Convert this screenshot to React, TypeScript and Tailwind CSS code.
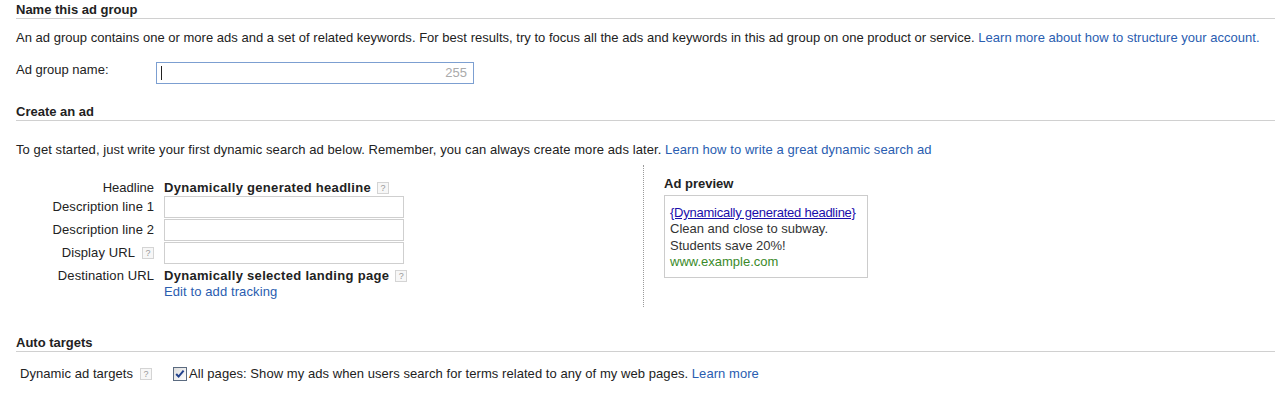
import React from "react";

function Help() {
  return (
    <span className="inline-flex h-[12px] w-[12px] items-center justify-center border border-[#d4d4d4] bg-[#f7f7f7] text-[9px] font-normal leading-none tracking-normal text-[#999]">
      ?
    </span>
  );
}

function Heading({ children }: { children: React.ReactNode }) {
  return (
    <div className="border-b border-[#d0d0d0] font-bold leading-[16px] text-[#222]">
      {children}
    </div>
  );
}

export default function App() {
  const link = "text-[#2a5db0]";
  return (
    <div
      className="w-[1278px] h-[397px] overflow-hidden bg-white pl-4 pr-[3px] pt-[2px] text-[13px] text-[#222]"
      style={{ fontFamily: '"Liberation Sans", Arial, sans-serif' }}
    >
      <Heading>Name this ad group</Heading>
      <p className="mt-[11px] whitespace-nowrap leading-[16px] tracking-[0.02px]">
        An ad group contains one or more ads and a set of related keywords. For best results, try to focus all the ads and keywords in this ad group on one product or service.{" "}
        <span className={link}>Learn more about how to structure your account.</span>
      </p>
      <div className="mt-[16px] flex items-start">
        <div className="w-[140px] leading-[16px]">Ad group name:</div>
        <div className="flex h-[22px] w-[318px] items-center justify-between border border-[#7c9fd1] pl-[4px] pr-[6px]">
          <span className="h-[14px] w-px bg-[#222]" />
          <span className="text-[#aaa]">255</span>
        </div>
      </div>

      <div className="mt-[20px]">
        <Heading>Create an ad</Heading>
      </div>
      <p className="mt-[21px] leading-[16px] tracking-[0.08px]">
        To get started, just write your first dynamic search ad below. Remember, you can always create more ads later.{" "}
        <span className={link}>Learn how to write a great dynamic search ad</span>
      </p>

      <div className="mt-[7px] flex h-[142px]">
        <div className="w-[627px] pt-[15px]">
          <div className="flex items-center leading-[16px]">
            <div className="w-[138px] text-right">Headline</div>
            <div className="ml-[10px] flex items-center gap-[6px] font-bold tracking-[0.3px]">
              Dynamically generated headline <Help />
            </div>
          </div>
          <div className="flex flex-col gap-[1px]">
            {["Description line 1", "Description line 2"].map((l) => (
              <div key={l} className="flex items-center">
                <div className="w-[138px] text-right leading-[16px] tracking-[0.1px]">{l}</div>
                <div className="ml-[10px] h-[22px] w-[240px] border border-[#cfcfcf]" />
              </div>
            ))}
            <div className="flex items-center">
              <div className="flex w-[138px] items-center justify-end gap-[7px] leading-[16px] tracking-[0.1px]">
                Display URL <Help />
              </div>
              <div className="ml-[10px] h-[22px] w-[240px] border border-[#cfcfcf]" />
            </div>
          </div>
          <div className="mt-[4px] flex items-start leading-[16px]">
            <div className="w-[138px] text-right tracking-[0.1px]">Destination URL</div>
            <div className="ml-[10px]">
              <div className="flex items-center gap-[6px] font-bold tracking-[0.3px]">
                Dynamically selected landing page <Help />
              </div>
              <div className={`${link} leading-[15px] tracking-[0.1px]`}>Edit to add tracking</div>
            </div>
          </div>
        </div>
        <div className="border-l border-dotted border-[#9a9a9a] pl-[20px] pt-[11px]">
          <div className="font-bold leading-[16px] text-[#222]">Ad preview</div>
          <div className="mt-[3px] h-[83px] w-[204px] border border-[#cccccc] px-[5px] pt-[9px] leading-[16.3px] text-[#333]">
            <div className="whitespace-nowrap text-[#1a0dab] underline tracking-[-0.25px]">{"{Dynamically generated headline}"}</div>
            <div>Clean and close to subway.</div>
            <div>Students save 20%!</div>
            <div className="text-[#3a8a2a]">www.example.com</div>
          </div>
        </div>
      </div>

      <div className="mt-[28px]">
        <Heading>Auto targets</Heading>
      </div>
      <div className="mt-[14px] flex items-center leading-[16px] tracking-[0.06px]">
        <div className="flex w-[157px] items-center gap-[7px] pl-[4px]">
          Dynamic ad targets <Help />
        </div>
        <svg width="14" height="14" viewBox="0 0 14 14" className="mr-[2px]">
          <defs>
            <linearGradient id="cb" x1="0" y1="0" x2="1" y2="1">
              <stop offset="0" stopColor="#dcdcdc" />
              <stop offset="1" stopColor="#ffffff" />
            </linearGradient>
          </defs>
          <rect x="0.5" y="0.5" width="13" height="13" fill="url(#cb)" stroke="#5b6b80" />
          <path d="M3.2 7 L5.6 9.6 L10.6 3.6" fill="none" stroke="#21418c" strokeWidth="2" />
        </svg>
        <span>
          All pages: Show my ads when users search for terms related to any of my web pages.{" "}
          <span className={link}>Learn more</span>
        </span>
      </div>
    </div>
  );
}
